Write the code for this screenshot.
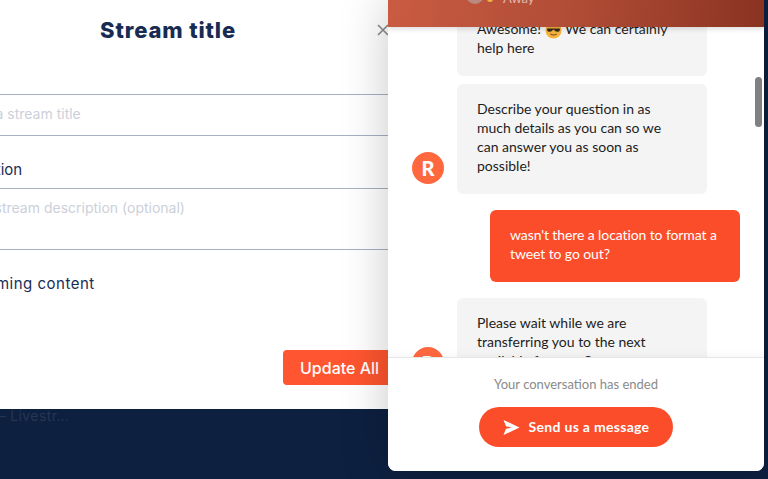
<script>
  const fields = [
    { text: "Enter a stream title" },
    { label: "Description", text: "Add a stream description (optional)" }
  ];
</script>

<div class="page">
  <section class="modal">
    <header class="modal-head">
      <h1>Stream title</h1>
      <svg class="close" width="12" height="12" viewBox="0 0 12 12" aria-hidden="true">
        <path d="M1 1l10 10M11 1L1 11" stroke="#8a8a8a" stroke-width="1.6" fill="none" />
      </svg>
    </header>

    <div class="field first">{fields[0].text}</div>
    <div class="label">{fields[1].label}</div>
    <div class="field second">{fields[1].text}</div>
    <div class="label upcoming">Upcoming content</div>

    <div class="actions">
      <button>Update All</button>
    </div>
  </section>

  <div class="tab-title"><span>Stream – Livestr…</span></div>

  <aside class="chat">
    <div class="chat-head">
      <div class="agent">
        <svg width="32" height="26" viewBox="0 0 32 26" aria-hidden="true">
          <circle cx="13" cy="13" r="9" fill="#b98a80" />
          <circle cx="14" cy="12" r="4" fill="#dcc0b4" />
          <circle cx="28" cy="17" r="3" fill="#f0b43c" />
        </svg>
        <span>Away</span>
      </div>
    </div>

    <div class="messages">
      <div class="row first-row">
        <div class="bubble">
          Awesome!
          <svg class="emoji" width="17" height="17" viewBox="0 0 16 16" aria-hidden="true">
            <circle cx="8" cy="8" r="7.5" fill="#f5b23e" />
            <path d="M2 6h12v1.500c0 1-1 1.700-2.400 1.700S9 8.500 8.600 7.400H7.400C7 8.500 5.800 9.200 4.400 9.200S2 8.500 2 7.500z" fill="#3a2a1a" />
            <path d="M5 11.200c1.800 1.300 4.200 1.300 6 0" stroke="#7a4a1a" fill="none" />
          </svg>
          We can certainly<br />help here
        </div>
      </div>
      <div class="row">
        <div class="avatar">R</div>
        <div class="bubble">Describe your question in as<br />much details as you can so we<br />can answer you as soon as<br />possible!</div>
      </div>
      <div class="row mine">
        <div class="bubble own">wasn't there a location to format a<br />tweet to go out?</div>
      </div>
      <div class="row">
        <div class="avatar">R</div>
        <div class="bubble">Please wait while we are<br />transferring you to the next<br />available for you. Support rep</div>
      </div>
    </div>

    <div class="chat-foot">
      <p>Your conversation has ended</p>
      <button class="send">
        <svg width="17" height="15" viewBox="0 0 17 15" aria-hidden="true">
          <path d="M0.500 0L16.500 7.500L0.500 15L3 8.800L9 7.500L3 6.200z" fill="#fff" />
        </svg>
        <span>Send us a message</span>
      </button>
    </div>

    <div class="scroll-thumb"></div>
  </aside>
</div>

<style>
  :global(body) {
    margin: 0;
    background: #0d2040;
  }

  .page {
    position: relative;
    width: 768px;
    height: 479px;
    overflow: hidden;
    background: #0d2040;
    font-family: "Inter", sans-serif;
  }

  .modal {
    width: 484px;
    height: 409px;
    margin-left: -74px;
    background: #fff;
    box-sizing: border-box;
    display: flex;
    flex-direction: column;
    color: #1a2b52;
  }

  .modal-head {
    height: 95px;
    box-sizing: border-box;
    padding-top: 15px;
    border-bottom: 1px solid #a7afc3;
    position: relative;
    text-align: center;
  }

  h1 {
    margin: 0;
    font-size: 22px;
    font-weight: 800;
    line-height: 30px;
    letter-spacing: 0.85px;
    color: #182c52;
  }

  .close {
    position: absolute;
    top: 24px;
    right: 21px;
  }

  .field {
    font-size: 14px;
    line-height: 18px;
    color: #ccd0da;
    box-sizing: border-box;
  }

  .field.first {
    height: 41px;
    padding: 10px 0 0 31px;
    border-bottom: 1px solid #a7afc3;
  }

  .label {
    padding-left: 15px;
    font-size: 15px;
    line-height: 18px;
    height: 53px;
    box-sizing: border-box;
    padding-top: 25px;
    color: #1a2b52;
    border-bottom: 1px solid #a7afc3;
  }

  .field.second {
    height: 61px;
    padding: 10px 0 0 26px;
    border-bottom: 1px solid #a7afc3;
  }

  .label.upcoming {
    border: 0;
    height: auto;
    padding: 25px 0 0 30px;
    letter-spacing: 0.5px;
  }

  .actions {
    display: flex;
    justify-content: flex-end;
    padding: 57px 15px 0 0;
  }

  .actions button {
    width: 112px;
    height: 35px;
    padding: 0;
    border: 0;
    border-radius: 4px;
    background: #ff5530;
    color: #fff;
    font-family: "Inter", sans-serif;
    font-size: 16px;
    font-weight: 500;
    text-align: left;
    text-indent: 17px;
  }

  .tab-title {
    width: 69px;
    margin-top: -1px;
    display: flex;
    justify-content: flex-end;
    white-space: nowrap;
    font-size: 14px;
    line-height: 16px;
    letter-spacing: 0.4px;
    color: #263655;
  }

  .tab-title span {
    flex: none;
  }

  .chat {
    position: absolute;
    left: 388px;
    top: 0;
    width: 376px;
    height: 471px;
    display: flex;
    flex-direction: column;
    overflow: hidden;
    background: #fff;
    border-radius: 0 0 8px 8px;
    box-shadow: 0 0 48px rgba(0, 0, 0, 0.22);
    font-family: "Lato", sans-serif;
  }

  .chat-head {
    flex: none;
    height: 27px;
    position: relative;
    z-index: 2;
    background: linear-gradient(100deg, #c95b42 0%, #b04c36 50%, #8a3321 100%);
    box-shadow: 0 2px 5px rgba(0, 0, 0, 0.14);
    overflow: hidden;
  }

  .agent {
    position: absolute;
    left: 74px;
    top: -18px;
    display: flex;
    align-items: center;
    gap: 9px;
    font-size: 13px;
    color: rgba(255, 255, 255, 0.6);
  }

  .agent span {
    margin-top: 6px;
  }

  .messages {
    flex: 1;
    min-height: 0;
    overflow: hidden;
    display: flex;
    flex-direction: column;
    gap: 8px;
    padding: 0 24px;
  }

  .row {
    display: flex;
    align-items: flex-end;
    flex: none;
    gap: 13px;
  }

  .first-row {
    margin-top: -23px;
    padding-left: 45px;
  }

  .row.mine {
    justify-content: flex-end;
    margin: 8px 0;
  }

  .avatar {
    flex: none;
    width: 32px;
    height: 32px;
    margin-bottom: 10px;
    border-radius: 50%;
    background: #ff683f;
    color: #fff;
    font-size: 20px;
    font-weight: 900;
    line-height: 32px;
    text-align: center;
  }

  .bubble {
    width: 250px;
    box-sizing: border-box;
    padding: 15px 20px 19px;
    border-radius: 6px;
    background: #f4f4f4;
    color: #1d1d1d;
    font-size: 14px;
    line-height: 19px;
    white-space: nowrap;
  }

  .bubble.own {
    background: #fc4d2a;
    color: #fff;
    letter-spacing: -0.1px;
  }

  .emoji {
    vertical-align: -3px;
    margin-block: -2px;
  }

  .chat-foot {
    flex: none;
    height: 114px;
    box-sizing: border-box;
    border-top: 1px solid #e6e6e6;
    background: #fff;
    position: relative;
    z-index: 1;
    box-shadow: 0 -3px 6px rgba(0, 0, 0, 0.03);
    display: flex;
    flex-direction: column;
    align-items: center;
  }

  .chat-foot p {
    margin: 17px 0 0;
    font-size: 13px;
    line-height: 18px;
    color: #8a8a8a;
  }

  .send {
    width: 194px;
    height: 40px;
    margin-top: 14px;
    padding: 0;
    border: 0;
    border-radius: 20px;
    background: #fc4d2a;
    color: #fff;
    display: flex;
    align-items: center;
    justify-content: center;
    gap: 9px;
    font-family: "Lato", sans-serif;
    font-size: 14px;
    font-weight: 700;
    letter-spacing: 0.3px;
  }

  .send span {
    margin-top: -1px;
  }

  .scroll-thumb {
    position: absolute;
    right: 2px;
    top: 77px;
    width: 7px;
    height: 50px;
    border-radius: 4px;
    background: #808080;
  }
</style>
